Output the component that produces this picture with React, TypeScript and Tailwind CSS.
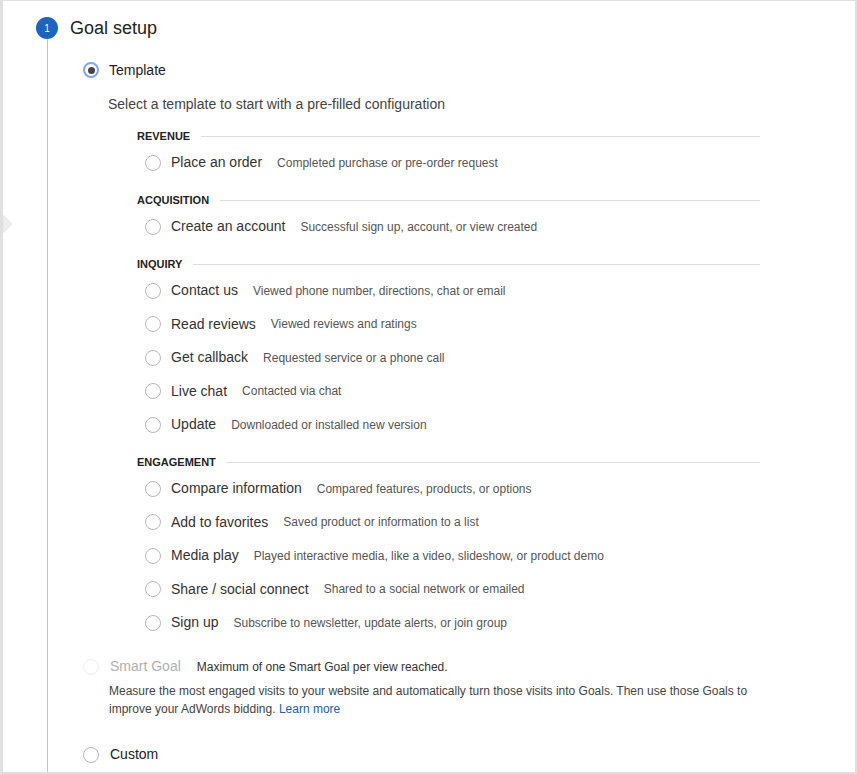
import React from "react";

type Item = { label: string; desc: string };
type Group = { title: string; items: Item[] };

const groups: Group[] = [
  {
    title: "REVENUE",
    items: [{ label: "Place an order", desc: "Completed purchase or pre-order request" }],
  },
  {
    title: "ACQUISITION",
    items: [{ label: "Create an account", desc: "Successful sign up, account, or view created" }],
  },
  {
    title: "INQUIRY",
    items: [
      { label: "Contact us", desc: "Viewed phone number, directions, chat or email" },
      { label: "Read reviews", desc: "Viewed reviews and ratings" },
      { label: "Get callback", desc: "Requested service or a phone call" },
      { label: "Live chat", desc: "Contacted via chat" },
      { label: "Update", desc: "Downloaded or installed new version" },
    ],
  },
  {
    title: "ENGAGEMENT",
    items: [
      { label: "Compare information", desc: "Compared features, products, or options" },
      { label: "Add to favorites", desc: "Saved product or information to a list" },
      { label: "Media play", desc: "Played interactive media, like a video, slideshow, or product demo" },
      { label: "Share / social connect", desc: "Shared to a social network or emailed" },
      { label: "Sign up", desc: "Subscribe to newsletter, update alerts, or join group" },
    ],
  },
];

function Radio({ checked = false, disabled = false }: { checked?: boolean; disabled?: boolean }) {
  if (checked) {
    return (
      <span className="flex h-4 w-4 shrink-0 items-center justify-center rounded-full border-2 border-[#7ea6f2] bg-white">
        <span className="h-[7px] w-[7px] rounded-full bg-[#444]" />
      </span>
    );
  }
  return (
    <span
      className={
        disabled
          ? "h-4 w-4 shrink-0 rounded-full border border-[#ececec] bg-white"
          : "h-4 w-4 shrink-0 rounded-full border border-[#b9b9b9] bg-white"
      }
    />
  );
}

export default function App() {
  return (
    <div
      className="relative h-[774px] w-[857px] overflow-hidden border-t border-r-2 border-b-2 border-l-[3px] border-[#e0e0e0] bg-white pl-[33px] pt-[16px] text-[#333]"
      style={{ fontFamily: '"Liberation Sans", Arial, sans-serif' }}
    >
      {/* side arrow */}
      <svg className="absolute left-0 top-[214px]" width="10" height="18" viewBox="0 0 10 18">
        <path d="M0 0 L9 9 L0 18 Z" fill="#eeeeee" stroke="#e4e4e4" strokeWidth="1" />
      </svg>

      <div className="flex h-[22px] items-center gap-3">
        <span className="flex h-[22px] w-[22px] items-center justify-center rounded-full bg-[#1c64c1] text-[10px] text-white">
          1
        </span>
        <h1 className="text-[18px] text-[#222]">Goal setup</h1>
      </div>

      <div className="ml-[11px] h-[800px] border-l border-[#c4c4c4] pl-[35px] pt-[21px]">
        {/* Template */}
        <div className="flex h-5 items-center gap-[10px]">
          <Radio checked />
          <span className="text-[14px] text-[#222]">Template</span>
        </div>
        <div className="ml-[25px] mt-[14px] flex h-5 items-center text-[14px] text-[#444]">
          Select a template to start with a pre-filled configuration
        </div>

        <div className="ml-[54px] mt-[13px] flex w-[623px] flex-col gap-[11.5px]">
          {groups.map((g) => (
            <div key={g.title}>
              <div className="flex h-[19px] items-center gap-[11px]">
                <span className="text-[11px] font-bold text-[#222]">{g.title}</span>
                <span className="h-px flex-1 bg-[#dcdcdc]" />
              </div>
              {g.items.map((it) => (
                <div key={it.label} className="ml-2 flex h-[33.5px] items-center">
                  <Radio />
                  <span className="ml-[10px] text-[14px] text-[#333]">{it.label}</span>
                  <span className="ml-[15px] text-[12px] text-[#555]">{it.desc}</span>
                </div>
              ))}
            </div>
          ))}
        </div>

        {/* Smart Goal */}
        <div className="mt-[17px] flex h-5 items-center">
          <Radio disabled />
          <span className="ml-[11px] text-[14px] text-[#b0b0b0]">Smart Goal</span>
          <span className="ml-4 text-[12px] text-[#333]">Maximum of one Smart Goal per view reached.</span>
        </div>
        <p className="ml-[26px] mt-[5px] w-[651px] text-[12px] leading-[18px] text-[#444]">
          Measure the most engaged visits to your website and automatically turn those visits into Goals. Then use
          those Goals to improve your AdWords bidding. <a className="text-[#1a5fb4]">Learn more</a>
        </p>

        {/* Custom */}
        <div className="mt-[27px] flex h-5 items-center gap-[11px]">
          <Radio />
          <span className="text-[14px] text-[#222]">Custom</span>
        </div>
      </div>
    </div>
  );
}
